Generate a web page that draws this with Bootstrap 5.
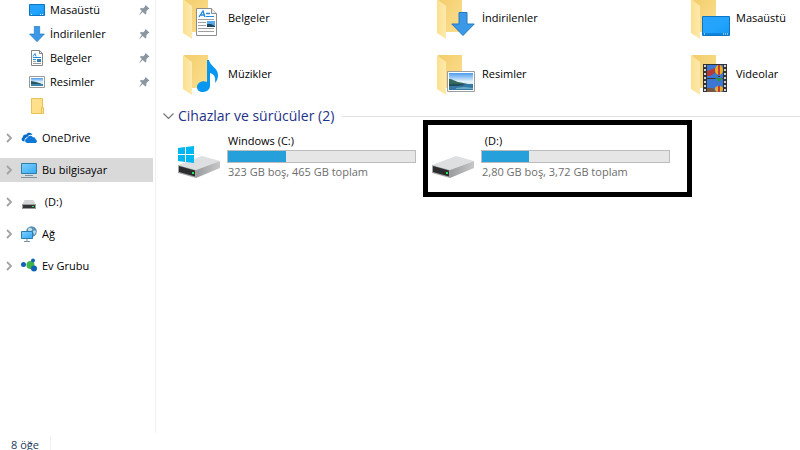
<!DOCTYPE html>
<html lang="tr">
<head>
<meta charset="utf-8">
<meta name="viewport" content="width=device-width, initial-scale=1">
<title>Bu bilgisayar</title>
<link href="https://cdn.jsdelivr.net/npm/bootstrap@5.3.0/dist/css/bootstrap.min.css" rel="stylesheet">
<style>
body { font-family: "Open Sans", "Noto Sans", sans-serif; font-size: 11px; line-height: 18px; color: #000; background: #fff; }
a { color: inherit; text-decoration: none; }
.side-pane { width: 156px; border-right: 1px solid #f1f1f1; }
.side-list { margin-top: -2px; }
.side-item { height: 24px; white-space: nowrap; }
.quick-item { padding-left: 29px; padding-right: 5px; gap: 5px; }
.tree-list { gap: 8px; margin-top: 8px; }
.tree-item { padding-left: 5px; margin-right: 2px; gap: 5px; }
.tree-item.active { background: #d9d9d9; }
.tree-item .chev { margin-right: 3px; }
.content-pane { padding-left: 18px; margin-top: -10px; }
.tiles { display: grid; grid-template-columns: repeat(3, 254px); }
.tile { padding-left: 3px; gap: 2px; white-space: nowrap; }
.folder-tile { height: 56px; }
.tile-text { padding-left: 1px; }
.section-head { height: 28px; margin-left: -12px; }
.section-btn { font-size: 14px; line-height: 20px; color: #1e3287; gap: 3px; }
.section-rule { height: 1px; background: #e2e2e2; margin-left: 8px; }
.drive-tile { padding-top: 2px; }
.usage { width: 189px; height: 13px; border: 1px solid #bcbcbc; background: #e6e6e6; }
.usage .progress-bar { background: #26a0da; }
.drive-sub { color: #6d6d6d; }
.marker { top: -10px; left: -5px; right: -10px; height: 77px; border: 5px solid #000; pointer-events: none; }
.status-strip { height: 17px; color: #1e395b; padding-left: 11px; padding-top: 3px; }
.status-text { border-right: 1px solid #f0f0f0; padding-right: 11px; }
</style>
</head>
<body class="vh-100 overflow-hidden d-flex flex-column">
<svg class="position-absolute" width="0" height="0" aria-hidden="true">
  <defs>
    <linearGradient id="gFront" x1="0" y1="0" x2="1" y2="0"><stop offset="0" stop-color="#fbe08d"/><stop offset="1" stop-color="#fde9ae"/></linearGradient>
    <linearGradient id="gBack" x1="0" y1="0" x2="1" y2="1"><stop offset="0" stop-color="#f3cd6c"/><stop offset="1" stop-color="#fbdf90"/></linearGradient>
    <linearGradient id="gScreen" x1="0" y1="0" x2="1" y2="1"><stop offset="0" stop-color="#2ba3fb"/><stop offset=".55" stop-color="#22a4fd"/><stop offset="1" stop-color="#1599f3"/></linearGradient>
    <linearGradient id="gSky" x1="0" y1="0" x2="0" y2="1"><stop offset="0" stop-color="#4c9bf0"/><stop offset=".5" stop-color="#e4f3fb"/><stop offset="1" stop-color="#bcdcea"/></linearGradient>
    <linearGradient id="gPc" x1="0" y1="0" x2="1" y2="1"><stop offset="0" stop-color="#7fd0ff"/><stop offset="1" stop-color="#36a9f3"/></linearGradient>
    <linearGradient id="gSide" x1="0" y1="0" x2="1" y2="0"><stop offset="0" stop-color="#9b9c9e"/><stop offset="1" stop-color="#c6c7c9"/></linearGradient>
  </defs>
  <symbol id="folder" viewBox="0 0 48 48">
    <path d="M7 5h24v33H15z" fill="url(#gBack)"/>
    <path d="M6 5l9 7v33L6 39z" fill="url(#gFront)"/>
  </symbol>
  <symbol id="picture" viewBox="0 0 28 21">
    <path d="M.5.5h27v20H.5z" fill="#fff" stroke="#9d9d9d"/>
    <path d="M2 2h24v17H2z" fill="url(#gSky)"/>
    <path d="M2 8c4 0 5 2 9 3s7 1 10 2H2z" fill="#36695d"/>
    <path d="M2 13h24v6H2z" fill="#3479a5"/>
    <path d="M2 13h12l5 1-8 1H2z" fill="#214c58"/><path d="M9 17l8-1 9 1v1H9z" fill="#6daac8"/>
  </symbol>
  <symbol id="arrow" viewBox="0 0 24 24">
    <path d="M8 .5h8V12h7.200L12 23.500.8 12H8z" fill="#3b99e8" stroke="#2478bd"/>
  </symbol>
  <symbol id="desktop" viewBox="0 0 28 20">
    <path d="M.5.5h27v19H.5z" fill="url(#gScreen)" stroke="#0d76c4"/>
    <path d="M1 17h26v2H1z" fill="#0f86da"/><path d="M2 18h1m18 0h1m1 0h1m1 0h1" stroke="#fff"/>
  </symbol>
  <symbol id="doc" viewBox="0 0 21 28">
    <path d="M.5.5h15l5 5v22H.5z" fill="#fff" stroke="#8c8c8c"/><path d="M15.500.5v5h5" fill="#eee" stroke="#8c8c8c"/>
    <path d="M3 9l4-6 2 6M4.500 7H9M10 5.500h4" fill="none" stroke="#2089db" stroke-width="1.300"/>
    <path d="M10 8.500h8" stroke="#2089db"/>
    <path d="M2 11.500h16M2 14.500h8M2 17.500h8M2 20.500h16M2 23.500h16" stroke="#a0a0a0"/>
    <path d="M11 13h8v6h-8z" fill="#5ba8e8"/><path d="M11 16l4 0 4 2v1h-8z" fill="#1d4a63"/>
  </symbol>
  <symbol id="drive" viewBox="0 0 43 22">
    <path d="M0 9L24 0l18 5-24 9z" fill="#dedfe1"/>
    <path d="M18 14l24-9v7L18 22z" fill="url(#gSide)"/>
    <path d="M0 9l18 5v8L0 17z" fill="#a4a6a8"/>
    <path d="M1 10l16 4.500v6L1 16z" fill="#2c2d2f"/>
    <path d="M14 16h2v2h-2z" fill="#2ee65a"/>
  </symbol>
  <symbol id="pin" viewBox="0 0 11 12">
    <path d="M6.500.8l4 4-1.300.5-1.900 1.900.1 2.400-1 .8L3.700 7.900.6 11 .2 10.700l2.600-3.600L.9 5.100l.9-1 2.500.1 1.900-2z" fill="#8a97a3"/>
  </symbol>
  <symbol id="chev" viewBox="0 0 8 10"><path d="M2 1l4 4-4 4" fill="none" stroke="#a3a3a3" stroke-width="1.800"/></symbol>
</svg>

<div class="d-flex flex-grow-1 overflow-hidden">
  <nav class="side-pane flex-shrink-0 overflow-hidden" aria-label="Gezinti">
    <div class="side-list d-flex flex-column">
      <a href="#" class="side-item quick-item d-flex align-items-center"><svg width="16" height="12" viewBox="0 0 16 12"><path d="M.5.5h15v11H.5z" fill="url(#gScreen)" stroke="#0d76c4"/><path d="M2 10.500h1m8 0h1m1 0h1" stroke="#fff"/></svg><span class="flex-grow-1">Masaüstü</span><svg width="11" height="12"><use href="#pin"/></svg></a>
      <a href="#" class="side-item quick-item d-flex align-items-center"><svg width="16" height="16"><use href="#arrow"/></svg><span class="flex-grow-1">İndirilenler</span><svg width="11" height="12"><use href="#pin"/></svg></a>
      <a href="#" class="side-item quick-item d-flex align-items-center"><svg width="16" height="16" viewBox="0 0 16 16"><path d="M2.500.5h8l3 3v12h-11z" fill="#fff" stroke="#858585"/><path d="M10.500.5v3h3" fill="none" stroke="#858585"/><path d="M4 6.500l2-3 1 3M4 7.500h8M4 9.500h3" fill="none" stroke="#2089db"/><path d="M8 9h4v3H8z" fill="#337fb5"/><path d="M4 11.500h3M4 13.500h8" stroke="#999"/></svg><span class="flex-grow-1">Belgeler</span><svg width="11" height="12"><use href="#pin"/></svg></a>
      <a href="#" class="side-item quick-item d-flex align-items-center"><svg width="16" height="12" viewBox="0 0 16 12"><path d="M.5.5h15v11H.5z" fill="#fff" stroke="#999"/><path d="M2 2h12v8H2z" fill="url(#gSky)"/><path d="M2 5l5 1 5 1.500V8H2z" fill="#285760"/><path d="M2 8h12v2H2z" fill="#3c82ad"/></svg><span class="flex-grow-1">Resimler</span><svg width="11" height="12"><use href="#pin"/></svg></a>
      <a href="#" class="side-item quick-item d-flex align-items-center" aria-label="Klasör"><svg width="16" height="16" viewBox="0 0 16 16"><path d="M2.500.5h11v15h-11z" fill="#fee08a" stroke="#e8c255"/><path d="M12.500 9.500h2v6h-2z" fill="#fee08a" stroke="#e8c255"/></svg></a>
      <div class="tree-list d-flex flex-column">
        <a href="#" class="side-item tree-item d-flex align-items-center"><svg class="chev" width="8" height="10"><use href="#chev"/></svg><svg width="16" height="16" viewBox="0 0 16 16"><path d="M3.500 11.500C.8 11.800-.5 8.500 1.800 7.200 1.700 5 4 4 5.300 4.700c1-2.500 5-2.700 6.200.3-2.300-.7-4.300.3-5 2-2 .2-3.200 2-3 4.500z" fill="#0a6cc9"/><path d="M6.500 13c-3 0-3.300-4.300-.3-4.800C6.500 5.300 11 4.800 12 7.400c1.500-.3 2.500.5 2.400 1.900 2.100.4 2 3.700-.4 3.700z" fill="#0f78d7"/></svg><span>OneDrive</span></a>
        <a href="#" class="side-item tree-item active d-flex align-items-center" aria-current="page"><svg class="chev" width="8" height="10"><use href="#chev"/></svg><svg width="16" height="16" viewBox="0 0 16 16"><path d="M.5 1.500h15v10H.5z" fill="url(#gPc)" stroke="#2b7fae"/><path d="M4 13.500h8M0 15.500h16" stroke="#7893a5"/></svg><span>Bu bilgisayar</span></a>
        <a href="#" class="side-item tree-item d-flex align-items-center"><svg class="chev" width="8" height="10"><use href="#chev"/></svg><svg width="16" height="16" viewBox="0 0 16 16"><path d="M3.500 6h9l2 4h-13z" fill="#d5d6d8"/><path d="M1 10h14v5H1z" fill="#9a9c9e"/><path d="M2 11h12v3H2z" fill="#323436"/><path d="M11 12h2v1h-2z" fill="#2ee65a"/></svg><span>&nbsp;(D:)</span></a>
        <a href="#" class="side-item tree-item d-flex align-items-center"><svg class="chev" width="8" height="10"><use href="#chev"/></svg><svg width="16" height="16" viewBox="0 0 16 16"><circle cx="10.500" cy="5.500" r="5.300" fill="#5a8fb0"/><path d="M7 3c2-2 3-1 4 0s-1 2-2 3-2-1-2-3zM12 5c2-1 3 0 3 1l-2 3z" fill="#bfe0ee"/><path d="M.5 5.500h11v7H.5z" fill="url(#gPc)" stroke="#2b7fae"/><path d="M6 13v2M3 15.500h6" stroke="#7893a5"/></svg><span>Ağ</span></a>
        <a href="#" class="side-item tree-item d-flex align-items-center"><svg class="chev" width="8" height="10"><use href="#chev"/></svg><svg width="16" height="16" viewBox="0 0 16 16"><circle cx="9.500" cy="7" r="4" fill="#3fb549"/><circle cx="2.500" cy="6.500" r="2.500" fill="#0f62b4"/><circle cx="12" cy="2.500" r="2" fill="#0f62b4"/><circle cx="13" cy="10.500" r="3" fill="#0f62b4"/></svg><span>Ev Grubu</span></a>
      </div>
    </div>
  </nav>

  <main class="flex-grow-1 overflow-hidden">
    <div class="content-pane">
      <div class="tiles">
        <a href="#" class="tile folder-tile d-flex align-items-center"><svg width="48" height="48" viewBox="0 0 48 48"><use href="#folder" width="48" height="48"/><use href="#doc" x="19" y="14" width="21" height="28"/></svg><span class="tile-text">Belgeler</span></a>
        <a href="#" class="tile folder-tile d-flex align-items-center"><svg width="48" height="48" viewBox="0 0 48 48"><use href="#folder" width="48" height="48"/><use href="#arrow" x="20" y="18" width="24" height="24"/></svg><span class="tile-text">İndirilenler</span></a>
        <a href="#" class="tile folder-tile d-flex align-items-center"><svg width="48" height="48" viewBox="0 0 48 48"><use href="#folder" width="48" height="48"/><use href="#desktop" x="17" y="22" width="28" height="20"/></svg><span class="tile-text">Masaüstü</span></a>
        <a href="#" class="tile folder-tile d-flex align-items-center"><svg width="48" height="48" viewBox="0 0 48 48"><use href="#folder" width="48" height="48"/><path d="M30 10h2c1 6 9 8 9 15 0 3-1 6-3 8 1-6-1-9-5-10v13c0 3-3 6-7 6s-6-2-6-5c0-4 5-7 10-5z" fill="#0796f0"/></svg><span class="tile-text">Müzikler</span></a>
        <a href="#" class="tile folder-tile d-flex align-items-center"><svg width="48" height="48" viewBox="0 0 48 48"><use href="#folder" width="48" height="48"/><use href="#picture" x="16" y="21" width="28" height="21"/></svg><span class="tile-text">Resimler</span></a>
        <a href="#" class="tile folder-tile d-flex align-items-center"><svg width="48" height="48" viewBox="0 0 48 48"><use href="#folder" width="48" height="48"/><path d="M18 14h24v28H18z" fill="#333"/><path d="M20 15v27M40 15v27" stroke="#d5d5d5" stroke-width="2" stroke-dasharray="2 2"/><path d="M22 15h16v13H22zM22 29h16v13H22z" fill="#3c77d3"/><path d="M22 21l8-3v5l-5 3h-3z" fill="#b33b3a"/><ellipse cx="34" cy="20" rx="4" ry="5" fill="#e9ae28"/><path d="M33 15h2v10h-2z" fill="#c43a34"/><path d="M30 28h8l-4 4z" fill="#318d4e"/><path d="M22 38l6 0 3 4h-9z" fill="#7b5742"/><ellipse cx="34" cy="39" rx="4" ry="3" fill="#e9ae28"/><path d="M33 36h2v6h-2z" fill="#c43a34"/><path d="M33 26h2v1h-2z" fill="#553019"/></svg><span class="tile-text">Videolar</span></a>
      </div>

      <div class="section-head d-flex align-items-center">
        <button type="button" class="section-btn btn p-0 border-0 rounded-0 d-flex align-items-center flex-shrink-0" aria-expanded="true"><svg width="13" height="8" viewBox="0 0 13 8"><path d="M1.500 1.500l5 5 5-5" fill="none" stroke="#757575" stroke-width="1.200"/></svg><span>Cihazlar ve sürücüler (2)</span></button>
        <span class="section-rule flex-grow-1"></span>
      </div>

      <div class="tiles">
        <a href="#" class="tile drive-tile d-flex">
          <svg width="48" height="48" viewBox="0 0 48 48"><use href="#drive" x="1" y="24" width="43" height="22"/><path d="M1 16l7-1v7H1zM9 15l8-1v8H9zM1 23h7v7l-7-1zM9 23h8v8l-8-1z" fill="#00b7f1"/></svg>
          <div><div class="tile-text">Windows (C:)</div><div class="usage progress rounded-0" role="progressbar" aria-label="Windows (C:)" aria-valuenow="31" aria-valuemin="0" aria-valuemax="100"><div class="progress-bar" style="width:31%"></div></div><div class="tile-text drive-sub">323 GB boş, 465 GB toplam</div></div>
        </a>
        <a href="#" class="tile drive-tile d-flex position-relative">
          <svg width="48" height="48" viewBox="0 0 48 48"><use href="#drive" x="1" y="24" width="43" height="22"/></svg>
          <div><div class="tile-text">&nbsp;(D:)</div><div class="usage progress rounded-0" role="progressbar" aria-label="(D:)" aria-valuenow="25" aria-valuemin="0" aria-valuemax="100"><div class="progress-bar" style="width:25%"></div></div><div class="tile-text drive-sub">2,80 GB boş, 3,72 GB toplam</div></div>
          <span class="marker position-absolute"></span>
        </a>
      </div>
    </div>
  </main>
</div>

<footer class="status-strip d-flex flex-shrink-0 overflow-hidden"><span class="status-text">8 öğe</span></footer>
<script src="https://cdn.jsdelivr.net/npm/bootstrap@5.3.0/dist/js/bootstrap.bundle.min.js"></script>
</body>
</html>
